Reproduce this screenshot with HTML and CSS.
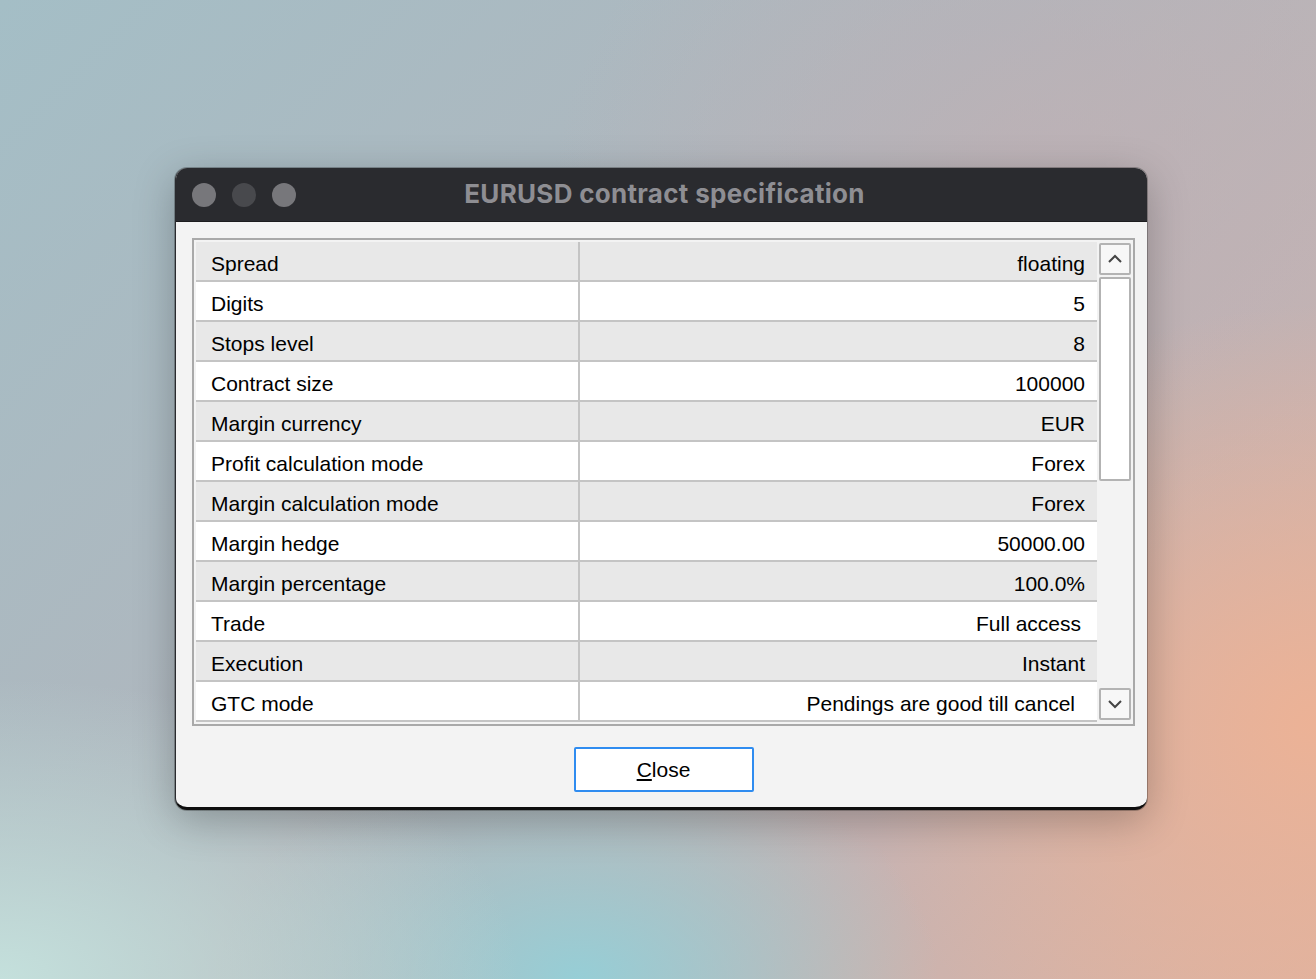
FILE: index.html
```html
<!DOCTYPE html>
<html>
<head>
<meta charset="utf-8">
<link rel="stylesheet" href="styles.css">
</head>
<body>
<div class="window">
  <div class="titlebar">
    <div class="lights">
      <span class="light l1"></span>
      <span class="light l2"></span>
      <span class="light l3"></span>
    </div>
    <div class="title">EURUSD contract specification</div>
  </div>
  <div class="content">
    <div class="frame">
      <div class="table">
        <div class="row odd"><div class="cell label">Spread</div><div class="cell value">floating</div></div>
        <div class="row"><div class="cell label">Digits</div><div class="cell value">5</div></div>
        <div class="row odd"><div class="cell label">Stops level</div><div class="cell value">8</div></div>
        <div class="row"><div class="cell label">Contract size</div><div class="cell value">100000</div></div>
        <div class="row odd"><div class="cell label">Margin currency</div><div class="cell value">EUR</div></div>
        <div class="row"><div class="cell label">Profit calculation mode</div><div class="cell value">Forex</div></div>
        <div class="row odd"><div class="cell label">Margin calculation mode</div><div class="cell value">Forex</div></div>
        <div class="row"><div class="cell label">Margin hedge</div><div class="cell value">50000.00</div></div>
        <div class="row odd"><div class="cell label">Margin percentage</div><div class="cell value">100.0%</div></div>
        <div class="row"><div class="cell label">Trade</div><div class="cell value pad-more">Full access</div></div>
        <div class="row odd"><div class="cell label">Execution</div><div class="cell value">Instant</div></div>
        <div class="row"><div class="cell label">GTC mode</div><div class="cell value pad-most">Pendings are good till cancel</div></div>
      </div>
      <div class="scrollbar">
        <div class="sbtn">
          <svg width="16" height="10" viewBox="0 0 16 10"><path d="M2 8 L8 2 L14 8" fill="none" stroke="#444" stroke-width="2"/></svg>
        </div>
        <div class="thumb"></div>
        <div class="track"></div>
        <div class="sbtn">
          <svg width="16" height="10" viewBox="0 0 16 10"><path d="M2 2 L8 8 L14 2" fill="none" stroke="#444" stroke-width="2"/></svg>
        </div>
      </div>
    </div>
    <div class="actions">
      <button class="close-btn"><span class="u">C</span>lose</button>
    </div>
  </div>
</div>
</body>
</html>
```
FILE: styles.css
```css
html, body {
  margin: 0;
  height: 100%;
}
body {
  width: 1316px;
  height: 979px;
  overflow: hidden;
  box-sizing: border-box;
  padding: 168px 0 0 175px;
  background:
    radial-gradient(ellipse 460px 420px at 100% 74%, rgba(236,178,150,1) 0%, rgba(236,178,150,0) 100%),
    radial-gradient(ellipse 520px 300px at 0% 100%, rgba(196,224,220,1) 0%, rgba(196,224,220,0) 100%),
    radial-gradient(ellipse 360px 240px at 44% 100%, rgba(150,206,214,1) 0%, rgba(150,206,214,0) 100%),
    radial-gradient(ellipse 500px 400px at 80% 20%, rgba(190,176,180,0.8) 0%, rgba(190,176,180,0) 100%),
    linear-gradient(135deg, #a4bec6 0%, #b0b6bd 45%, #c7b3b2 75%, #dcb3a2 100%);
  font-family: "Liberation Sans", Arial, sans-serif;
}
.window {
  width: 972px;
  height: 642px;
  border-radius: 12px;
  overflow: hidden;
  display: flex;
  flex-direction: column;
  box-shadow: 0 10px 40px rgba(0,0,0,0.25), 0 0 0 1px rgba(0,0,0,0.25);
  background: #f3f3f3;
  box-sizing: border-box;
  border-bottom: 3px solid #0d0d0d;
  border-left: 1px solid #2a2b2f;
}
.titlebar {
  position: relative;
  height: 54px;
  flex: none;
  background: #2a2b2f;
  display: flex;
  align-items: center;
  padding-left: 16px;
  border-bottom: 1px solid #1c1c1e;
  box-sizing: border-box;
}
.lights {
  display: flex;
  gap: 16px;
}
.light {
  width: 24px;
  height: 24px;
  border-radius: 50%;
  background: #77777b;
}
.light.l2 {
  background: #48494d;
}
.title {
  position: absolute;
  left: 0;
  right: 0;
  top: 0;
  bottom: 3px;
  display: flex;
  align-items: center;
  justify-content: center;
  padding-left: 6px;
  color: #8e8e93;
  font-family: Inter, "Open Sans", sans-serif;
  font-weight: 700;
  font-size: 26px;
  letter-spacing: 0.3px;
}
.content {
  flex: 1;
  display: flex;
  flex-direction: column;
  padding: 16px 12px 0 16px;
}
.frame {
  border: 2px solid #a9a9a9;
  padding: 2px;
  display: flex;
  gap: 2px;
  background: #f3f3f3;
  width: 943px;
  box-sizing: border-box;
}
.table {
  width: 901px;
  flex: none;
  display: flex;
  flex-direction: column;
}
.row {
  display: flex;
  height: 40px;
  box-sizing: border-box;
  border-bottom: 2px solid #c4c4c4;
  background: #ffffff;
}
.row.odd {
  background: #e8e8e8;
}
.cell {
  display: flex;
  align-items: center;
  padding-top: 5px;
  font-size: 21px;
  color: #000;
  box-sizing: border-box;
}
.label {
  width: 384px;
  flex: none;
  padding-left: 15px;
  border-right: 2px solid #c4c4c4;
}
.value {
  flex: 1;
  justify-content: flex-end;
  padding-right: 12px;
}
.value.pad-more {
  padding-right: 16px;
}
.value.pad-most {
  padding-right: 22px;
}
.scrollbar {
  width: 32px;
  flex: none;
  display: flex;
  flex-direction: column;
  padding-top: 1px;
  padding-bottom: 2px;
}
.sbtn {
  height: 32px;
  box-sizing: border-box;
  border: 2px solid #b3b3b3;
  border-radius: 2px;
  background: #f7f7f7;
  display: flex;
  align-items: center;
  justify-content: center;
  flex: none;
}
.thumb {
  margin-top: 2px;
  height: 204px;
  box-sizing: border-box;
  border: 2px solid #b3b3b3;
  border-radius: 2px;
  background: #ffffff;
  flex: none;
}
.track {
  flex: 1;
}
.actions {
  display: flex;
  justify-content: center;
  padding-top: 21px;
}
.close-btn {
  width: 180px;
  height: 45px;
  background: #ffffff;
  border: 2px solid #2f8cf0;
  border-radius: 2px;
  font-family: "Liberation Sans", Arial, sans-serif;
  font-size: 21px;
  color: #000;
  padding: 0;
}
.close-btn .u {
  text-decoration: underline;
}
```
